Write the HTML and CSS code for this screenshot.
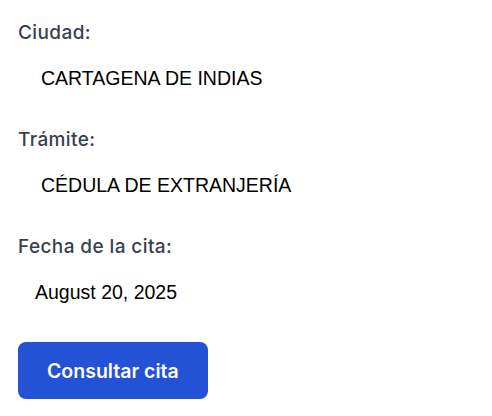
FILE: index.html
```html
<!DOCTYPE html>
<html>
<head>
    <title>Consulta de cita</title>
    <link rel="stylesheet" href="styles.css">
</head>
<body>
    <form class="form-cita">
        <div class="campo">
            <label class="etiqueta">Ciudad:</label>
            <div class="valor">CARTAGENA DE INDIAS</div>
        </div>

        <div class="campo">
            <label class="etiqueta">Trámite:</label>
            <div class="valor">CÉDULA DE EXTRANJERÍA</div>
        </div>

        <div class="campo">
            <label class="etiqueta">Fecha de la cita:</label>
            <div class="valor fecha">August 20, 2025</div>
        </div>

        <button type="button" class="boton">Consultar cita</button>
    </form>
</body>
</html>
```

FILE: styles.css
```css
body {
    margin: 0;
    padding: 16px 18px;
    font-family: Inter, "Liberation Sans", Arial, sans-serif;
    background: #fff;
}
.form-cita {
    display: flex;
    flex-direction: column;
    align-items: flex-start;
}
.campo {
    display: flex;
    flex-direction: column;
    margin-bottom: 21px;
}
.etiqueta {
    padding-top: 3px;
    font-size: 19px;
    line-height: 28px;
    font-weight: 500;
    letter-spacing: 0.4px;
    color: #374151;
}
.valor {
    margin-top: 7px;
    padding: 12px 0 12px 23px;
    font-family: "Liberation Sans", Arial, sans-serif;
    font-size: 19.5px;
    line-height: 24px;
    color: #000;
}
.fecha {
    padding-left: 17px;
}
.boton {
    margin-top: 5px;
    height: 57px;
    padding: 0 29px;
    border: none;
    border-radius: 8px;
    background-color: #2352d4;
    color: #fff;
    font-family: Inter, "Liberation Sans", Arial, sans-serif;
    font-size: 19.5px;
    font-weight: 600;
    cursor: pointer;
}
```
